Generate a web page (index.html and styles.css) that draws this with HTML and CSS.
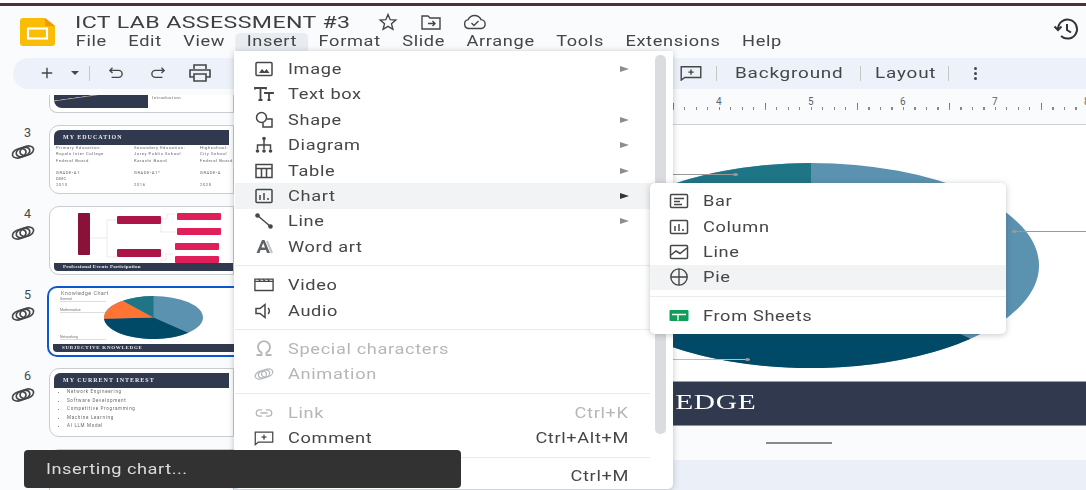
FILE: index.html
```html
<!DOCTYPE html>
<html lang="en">
<head>
  <meta charset="UTF-8" />
  <title>ICT LAB ASSESSMENT #3</title>
  <link rel="stylesheet" href="styles.css">
</head>
<body>
  <div class="app">
    <div class="topline"></div>

    <header class="header">
      <svg class="logo" viewBox="0 0 35 28"><path d="M3 0h22l10 8v17a3 3 0 0 1-3 3H3a3 3 0 0 1-3-3V3a3 3 0 0 1 3-3z" fill="#fbbc04"/><path d="M25 0l10 8h-10z" fill="#f29900"/><rect x="8" y="10.500" width="19" height="10" fill="none" stroke="#fff" stroke-width="2.200"/></svg>
      <div class="doc">
        <div class="title-row">
          <span class="title">ICT LAB ASSESSMENT #3</span>
          <svg class="title-icon star" viewBox="0 0 20 20"><path d="M10 2.500l2.200 5.200 5.600.4-4.300 3.700 1.400 5.500L10 14.300l-4.900 3 1.400-5.500-4.300-3.700 5.600-.4z"/></svg>
          <svg class="title-icon folder" viewBox="0 0 22 16"><path d="M2 2h6l2 2h10v11H2z"/><path d="M8 9.500h7M12.500 7l2.500 2.500-2.500 2.500"/></svg>
          <svg class="title-icon cloud" viewBox="0 0 26 16"><path d="M7 14.500a4.500 4.500 0 0 1-.8-8.900A7 7 0 0 1 19 5.600a4.500 4.500 0 0 1 .5 8.900z"/><path d="M9.500 9l2.500 2.500 4.500-4.500"/></svg>
        </div>
        <nav class="menubar">
          <span class="menubar-item">File</span>
          <span class="menubar-item">Edit</span>
          <span class="menubar-item">View</span>
          <span class="menubar-item active">Insert</span>
          <span class="menubar-item">Format</span>
          <span class="menubar-item">Slide</span>
          <span class="menubar-item">Arrange</span>
          <span class="menubar-item">Tools</span>
          <span class="menubar-item">Extensions</span>
          <span class="menubar-item">Help</span>
        </nav>
      </div>
      <svg class="history" viewBox="0 0 28 24"><path d="M6 12a9.500 9.500 0 1 1 3 7"/><path d="M2.500 9.500L6 13l3.500-3.500"/><path d="M15 7v6l4 2.500"/></svg>
    </header>

    <div class="toolbar">
      <svg class="tool tool-plus" viewBox="0 0 16 16"><path d="M8 2v12M2 8h12"/></svg>
      <span class="caret"></span>
      <span class="tool-sep sep-add"></span>
      <svg class="tool tool-undo" viewBox="0 0 18 16"><path d="M5 2L2 5l3 3M2 5h10a3.500 3.500 0 0 1 0 8H4"/></svg>
      <svg class="tool tool-redo" viewBox="0 0 18 16"><path d="M13 2l3 3-3 3M16 5H6a3.500 3.500 0 0 0 0 8h8"/></svg>
      <svg class="tool tool-print" viewBox="0 0 22 18"><path d="M5 5V1h12v4M5 13H1V6h20v7h-4M5 10h12v7H5z"/></svg>
      <svg class="tool tool-comment" viewBox="0 0 24 18"><path d="M1 17V2h22v12H5z"/><path d="M12 5v6M9 8h6"/></svg>
      <span class="tool-sep sep-comment"></span>
      <span class="tool-text tool-background">Background</span>
      <span class="tool-sep"></span>
      <span class="tool-text tool-layout">Layout</span>
      <span class="tool-sep"></span>
      <span class="kebab"><i></i><i></i><i></i></span>
    </div>

    <div class="workspace">
      <aside class="filmstrip">
        <div class="film-row tail">
          <div class="thumb thumb-tail">
            <div class="tail-dark"></div>
            <span class="tiny tail-text">Introduction</span>
          </div>
        </div>

        <div class="film-row">
          <div class="film-side">
            <span class="film-num">3</span>
            <svg class="rings" viewBox="0 0 24 16"><g transform="rotate(-18 12 8)"><ellipse cx="8" cy="8" rx="7" ry="4.500"/><ellipse cx="12" cy="8" rx="7" ry="4.500"/><ellipse cx="16" cy="8" rx="7" ry="4.500"/></g></svg>
          </div>
          <div class="thumb">
            <div class="band band-top">MY EDUCATION</div>
            <div class="edu-grid tiny">
              <span>Primary Education:</span><span>Secondary Education:</span><span>Highschool:</span>
              <span>Royale Inter College</span><span>Jorey Public School</span><span>City School</span>
              <span>Federal Board</span><span>Karachi Board</span><span>Federal Board</span>
              <span class="edu-gap">GRADE-A1</span><span class="edu-gap">GRADE-A1*</span><span class="edu-gap">GRADE-A</span>
              <span>DMC</span><span></span><span></span>
              <span>2013</span><span>2016</span><span>2020</span>
            </div>
          </div>
        </div>

        <div class="film-row">
          <div class="film-side">
            <span class="film-num">4</span>
            <svg class="rings" viewBox="0 0 24 16"><g transform="rotate(-18 12 8)"><ellipse cx="8" cy="8" rx="7" ry="4.500"/><ellipse cx="12" cy="8" rx="7" ry="4.500"/><ellipse cx="16" cy="8" rx="7" ry="4.500"/></g></svg>
          </div>
          <div class="thumb thumb-tree">
            <svg class="tree" viewBox="0 0 185 60">
              <path d="M40 28h17M57 28V10h10M57 28v19h10M111 9h6v-5h8M111 9v13h14M111 50h5v-6h7M111 50v12h12" fill="none" stroke="#e3e3e3" stroke-width=".7"/>
              <rect x="28" y="3" width="12" height="42" rx="1" fill="#8a1238"/>
              <rect x="67" y="6" width="44" height="8" rx="1" fill="#ad1448"/>
              <rect x="127" y="3" width="44" height="7" rx="1" fill="#e01e5a"/>
              <rect x="127" y="18" width="44" height="7" rx="1" fill="#e01e5a"/>
              <rect x="67" y="39" width="44" height="8" rx="1" fill="#ad1448"/>
              <rect x="125" y="33" width="44" height="7" rx="1" fill="#e01e5a"/>
              <rect x="125" y="46" width="44" height="7" rx="1" fill="#e01e5a"/>
            </svg>
            <div class="band band-bottom">Professional Events Participation</div>
          </div>
        </div>

        <div class="film-row">
          <div class="film-side">
            <span class="film-num">5</span>
            <svg class="rings" viewBox="0 0 24 16"><g transform="rotate(-18 12 8)"><ellipse cx="8" cy="8" rx="7" ry="4.500"/><ellipse cx="12" cy="8" rx="7" ry="4.500"/><ellipse cx="16" cy="8" rx="7" ry="4.500"/></g></svg>
          </div>
          <div class="thumb selected">
            <span class="chart-title">Knowledge Chart</span>
            <span class="chart-label label-general">General</span>
            <span class="chart-label label-maths">Mathematics</span>
            <span class="chart-label label-network">Networking</span>
            <svg class="mini-pie" viewBox="0 0 200 100" preserveAspectRatio="none"><use href="#pie"/></svg>
            <div class="band band-bottom band-caps">SUBJECTIVE KNOWLEDGE</div>
          </div>
        </div>

        <div class="film-row">
          <div class="film-side">
            <span class="film-num">6</span>
            <svg class="rings" viewBox="0 0 24 16"><g transform="rotate(-18 12 8)"><ellipse cx="8" cy="8" rx="7" ry="4.500"/><ellipse cx="12" cy="8" rx="7" ry="4.500"/><ellipse cx="16" cy="8" rx="7" ry="4.500"/></g></svg>
          </div>
          <div class="thumb">
            <div class="band band-top">MY CURRENT INTEREST</div>
            <ul class="interest tiny">
              <li>Network Engineering</li>
              <li>Software Development</li>
              <li>Competitive Programming</li>
              <li>Machine Learning</li>
              <li>AI LLM Model</li>
            </ul>
          </div>
        </div>

        <div class="film-row">
          <div class="film-side"></div>
          <div class="thumb"></div>
        </div>
      </aside>

      <main class="canvas">
        <div class="ruler">
          <span class="ruler-num">4</span>
          <span class="ruler-num">5</span>
          <span class="ruler-num">6</span>
          <span class="ruler-num">7</span>
          <span class="ruler-num">8</span>
        </div>
        <div class="slide">
          <svg class="pie" viewBox="0 0 200 100" preserveAspectRatio="none">
            <defs>
              <g id="pie">
                <ellipse cx="100" cy="50" rx="100" ry="50" fill="#5b92b0"/>
                <path d="M100 50L170 85.700A100 50 0 0 1 0 53z" fill="#004a68"/>
                <path d="M100 50L0 53A100 50 0 0 1 38 11z" fill="#ff7433"/>
                <path d="M100 50L38 11A100 50 0 0 1 100 0z" fill="#1e7585"/>
              </g>
            </defs>
            <use href="#pie"/>
          </svg>
          <span class="leader leader-top"></span>
          <span class="leader leader-right"></span>
          <span class="leader leader-bottom"></span>
        </div>
        <div class="slide-band"><span class="slide-band-text">LEDGE</span></div>
        <div class="notes"><span class="notes-line"></span></div>
        <div class="canvas-foot"></div>
      </main>

      <div class="menu">
        <div class="menu-item"><svg class="mi" viewBox="0 0 20 20"><rect x="2" y="3.500" width="16" height="13" rx="1"/><path class="solid" d="M5 14l3-4 2.500 2.500L12.500 10 15.500 14z"/></svg><span class="mi-label">Image</span><span class="arrow"></span></div>
        <div class="menu-item"><svg class="mi" viewBox="0 0 20 20"><path d="M1 5.500V4h11v1.500M6.500 4v12M4.500 16h4M11 10V9h8v1M15 9v7M13.500 16h3" stroke-width="1.800"/></svg><span class="mi-label">Text box</span></div>
        <div class="menu-item"><svg class="mi" viewBox="0 0 20 20"><circle cx="7.500" cy="7.500" r="5"/><path d="M13 9h5v8H9v-4"/></svg><span class="mi-label">Shape</span><span class="arrow"></span></div>
        <div class="menu-item"><svg class="mi" viewBox="0 0 20 20"><circle class="solid" cx="10" cy="3.500" r="1.800"/><path d="M10 4v6M3.500 14v-4h13v4M10 10v4"/><circle class="solid" cx="3.500" cy="16" r="1.800"/><circle class="solid" cx="10" cy="16" r="1.800"/><circle class="solid" cx="16.500" cy="16" r="1.800"/></svg><span class="mi-label">Diagram</span><span class="arrow"></span></div>
        <div class="menu-item"><svg class="mi" viewBox="0 0 20 20"><path d="M2 3.500h16v13H2zM2 7.500h16M7.500 7.500v9M12.500 7.500v9"/></svg><span class="mi-label">Table</span><span class="arrow"></span></div>
        <div class="menu-item hover"><svg class="mi" viewBox="0 0 20 20"><rect x="2" y="3.500" width="16" height="13" rx="1"/><path d="M6 9v5M10 7v7M14 12v2"/></svg><span class="mi-label">Chart</span><span class="arrow dark"></span></div>
        <div class="menu-item"><svg class="mi" viewBox="0 0 20 20"><path d="M3.500 4.500l13 11"/><circle class="solid" cx="3.500" cy="4.500" r="2.300"/><circle class="solid" cx="16.500" cy="15.500" r="2.300"/></svg><span class="mi-label">Line</span><span class="arrow"></span></div>
        <div class="menu-item"><svg class="mi wordart" viewBox="0 0 20 20"><path d="M13 4l5 12" stroke="#c4c4c4" stroke-width="2"/><path class="solid" d="M8 3h2.500L16 16h-3l-1-3H6.500l-1 3h-3zM7.500 10.500h3.500L9.200 6z"/></svg><span class="mi-label">Word art</span></div>
        <div class="menu-sep"></div>
        <div class="menu-item"><svg class="mi" viewBox="0 0 22 20"><path d="M1 6h20v10H1zM1 3.500h20v2.500H1z"/><path d="M5 3.500l2 2.500M10 3.500l2 2.500M15 3.500l2 2.500"/></svg><span class="mi-label">Video</span></div>
        <div class="menu-item"><svg class="mi" viewBox="0 0 20 20"><path d="M2 7.500h4l5-4v13l-5-4H2z"/><path d="M14 7a4 4 0 0 1 0 6"/></svg><span class="mi-label">Audio</span></div>
        <div class="menu-sep"></div>
        <div class="menu-item off"><svg class="mi" viewBox="0 0 20 20"><path d="M2.500 16h5v-2.500a6 6 0 1 1 5 0V16h5" stroke-width="1.800"/></svg><span class="mi-label">Special characters</span></div>
        <div class="menu-item off"><svg class="mi" viewBox="0 0 24 16"><g transform="rotate(-18 12 8)"><ellipse cx="8" cy="8" rx="7" ry="4.500"/><ellipse cx="12" cy="8" rx="7" ry="4.500"/><ellipse cx="16" cy="8" rx="7" ry="4.500"/></g></svg><span class="mi-label">Animation</span></div>
        <div class="menu-sep"></div>
        <div class="menu-item off"><svg class="mi" viewBox="0 0 22 20"><path d="M9 6.500H6a3.500 3.500 0 0 0 0 7h3M13 6.500h3a3.500 3.500 0 0 1 0 7h-3M7 10h8"/></svg><span class="mi-label">Link</span><span class="hint">Ctrl+K</span></div>
        <div class="menu-item"><svg class="mi" viewBox="0 0 24 20"><path d="M1.500 18V3h21v12H5z"/><path d="M12 6v6M9 9h6"/></svg><span class="mi-label">Comment</span><span class="hint">Ctrl+Alt+M</span></div>
        <div class="menu-sep"></div>
        <div class="menu-item"><span class="hint">Ctrl+M</span></div>
        <div class="menu-scroll"></div>
      </div>

      <div class="submenu">
        <div class="menu-item"><svg class="mi" viewBox="0 0 20 20"><rect x="1.500" y="3.500" width="17" height="13" rx="1"/><path d="M5 7.500h10M5 10.500h6M5 13.500h8"/></svg><span class="mi-label">Bar</span></div>
        <div class="menu-item"><svg class="mi" viewBox="0 0 20 20"><rect x="1.500" y="3.500" width="17" height="13" rx="1"/><path d="M6 9v5M10 7v7M14 12v2"/></svg><span class="mi-label">Column</span></div>
        <div class="menu-item"><svg class="mi" viewBox="0 0 20 20"><rect x="1.500" y="3.500" width="17" height="13" rx="1"/><path d="M2 13l5-4 4 2.500 7-5.500"/></svg><span class="mi-label">Line</span></div>
        <div class="menu-item hover"><svg class="mi" viewBox="0 0 22 20"><circle cx="11" cy="10" r="9"/><path d="M2 10h18M11 1v18"/></svg><span class="mi-label">Pie</span></div>
        <div class="menu-sep"></div>
        <div class="menu-item"><svg class="mi sheets" viewBox="0 0 20 20"><rect x="0.500" y="4" width="19" height="11" rx="1" fill="#0f9d58"/><path d="M3 8.500h14M9 8.500v6" stroke="#fff" stroke-width="1.300"/></svg><span class="mi-label">From Sheets</span></div>
      </div>

      <div class="toast"><span class="toast-text">Inserting chart...</span></div>
    </div>
  </div>
</body>
</html>
```

FILE: styles.css
```css
* {
  box-sizing: border-box;
}
html, body {
  margin: 0;
  height: 100%;
  overflow: hidden;
}
body {
  font-family: 'Roboto', 'Liberation Sans', sans-serif;
  color: #444746;
  background: #f9fbfd;
}
.app {
  width: 1086px;
  height: 490px;
  display: flex;
  flex-direction: column;
  overflow: hidden;
}
.topline {
  height: 6px;
  flex: none;
  border-top: 3px solid #fff;
  background: #4a3531;
}

/* header */
.header {
  height: 52px;
  flex: none;
  display: flex;
  padding-left: 20px;
  padding-right: 6px;
}
.logo {
  width: 35px;
  height: 28px;
  margin-top: 12px;
  flex: none;
}
.doc {
  margin-left: 20px;
}
.title-row {
  height: 27px;
  padding-top: 5px;
  display: flex;
  align-items: center;
}
.title {
  width: 303px;
  flex: none;
  font-size: 17px;
  letter-spacing: .3px;
  color: #3c4043;
  white-space: nowrap;
  transform: scaleX(1.36);
  transform-origin: left;
}
.title-icon {
  fill: none;
  stroke: #444746;
  stroke-width: 1.400;
  flex: none;
}
.star { width: 20px; height: 20px; }
.folder { width: 22px; height: 16px; margin-left: 22px; }
.cloud { width: 26px; height: 16px; margin-left: 20px; }
.menubar {
  display: flex;
  margin-left: -10px;
  height: 18px;
  width: 560px;
  transform: scaleX(1.3);
  transform-origin: left;
}
.menubar-item {
  padding: 0 8.250px;
  font-size: 14px;
  line-height: 17px;
  letter-spacing: .5px;
  color: #444746;
  white-space: nowrap;
}
.menubar-item.active {
  background: #e8ecf1;
  border-radius: 4px 4px 0 0;
}
.history {
  width: 28px;
  height: 24px;
  margin-left: auto;
  margin-top: 11px;
  fill: none;
  stroke: #333;
  stroke-width: 2;
}

/* toolbar */
.toolbar {
  height: 31px;
  flex: none;
  margin-left: 13px;
  padding-left: 27px;
  padding-bottom: 1px;
  display: flex;
  align-items: center;
  background: #edf2fa;
  border-radius: 16px 0 0 16px;
}
.tool {
  fill: none;
  stroke: #444746;
  stroke-width: 1.600;
  flex: none;
}
.tool-plus { width: 14px; height: 14px; }
.caret {
  width: 0;
  height: 0;
  margin-left: 17px;
  border: 4px solid transparent;
  border-top: 4px solid #444746;
  border-bottom: 0;
}
.tool-sep {
  width: 1px;
  height: 15px;
  margin: 0 14px;
  background: #c4c7c5;
  flex: none;
}
.sep-add { margin-left: 10px; }
.tool-undo { width: 18px; height: 14px; margin-left: 3px; }
.tool-redo { width: 18px; height: 14px; margin-left: 24px; }
.tool-print { width: 22px; height: 18px; margin-left: 22px; }
.tool-comment { width: 22px; height: 16px; margin-left: 469px; }
.sep-comment { margin-left: 14px; margin-right: 18px; }
.tool-text {
  flex: none;
  font-size: 14px;
  letter-spacing: .6px;
  color: #444746;
  white-space: nowrap;
  transform: scaleX(1.35);
  transform-origin: left;
}
.tool-background { margin-right: 31px; }
.tool-layout { margin-right: 13px; }
.kebab {
  display: flex;
  flex-direction: column;
  gap: 2px;
  margin-left: 11px;
}
.kebab i {
  width: 3px;
  height: 3px;
  background: #444746;
  border-radius: 50%;
}

/* workspace */
.workspace {
  position: relative;
  flex: 1;
  display: flex;
  min-height: 0;
}
.filmstrip {
  width: 234px;
  flex: none;
  padding-top: 6px;
  display: flex;
  flex-direction: column;
  gap: 12px;
  overflow: hidden;
}
.film-row {
  display: flex;
  height: 69px;
  flex: none;
}
.film-row.tail {
  height: 18px;
  padding-left: 49px;
}
.film-side {
  width: 49px;
  flex: none;
  display: flex;
  flex-direction: column;
  align-items: center;
}
.film-num {
  font-size: 12.500px;
  line-height: 14px;
  color: #444746;
  margin-top: 1px;
  margin-left: 6px;
}
.rings {
  width: 24px;
  height: 16px;
  margin-top: 4px;
  margin-right: 3px;
  fill: none;
  stroke: #444746;
  stroke-width: 1.700;
}
.thumb {
  position: relative;
  flex: 1;
  height: 100%;
  padding: 4px;
  background: #fff;
  border: 1px solid #c9ccd0;
  border-radius: 10px 0 0 10px;
  overflow: hidden;
}
.thumb > * {
  filter: blur(.3px);
}
.thumb-tail {
  display: flex;
  padding: 0 4px 4px;
  border-top: 0;
  border-radius: 0 0 0 8px;
}
.tail-dark {
  width: 94px;
  height: 100%;
  background: #30394d linear-gradient(172deg, transparent 20%, #b9ab9b 22%, transparent 26%);
  border-radius: 0 0 0 8px;
}
.tail-text {
  margin-left: 4px;
}
.tiny {
  font-size: 4.200px;
  color: #666;
  line-height: 6.300px;
  letter-spacing: .55px;
}
.band {
  background: #30394d;
  color: #e8eaed;
  font-family: 'Liberation Serif', serif;
  font-weight: bold;
  white-space: nowrap;
}
.band-top {
  height: 15px;
  padding-left: 9px;
  font-size: 6px;
  line-height: 15px;
  letter-spacing: 1px;
  border-radius: 6px 0 0 0;
}
.band-bottom {
  position: absolute;
  left: 4px;
  right: 0;
  bottom: 3px;
  height: 8px;
  padding-left: 9px;
  font-size: 5px;
  line-height: 8px;
  letter-spacing: .2px;
  border-radius: 0 0 0 4px;
}
.band-caps {
  letter-spacing: .7px;
}
.edu-grid {
  display: grid;
  grid-template-columns: 78px 66px 1fr;
  padding-left: 2px;
  white-space: nowrap;
}
.edu-gap {
  margin-top: 6px;
}
.tree {
  position: absolute;
  left: 0;
  top: 0;
  width: 185px;
  height: 60px;
  margin-top: 3px;
}
.selected {
  overflow: visible;
  border: 2.500px solid #0b57d0;
  border-right: 0;
  margin-left: -2px;
  margin-top: -1px;
  height: 71px;
  border-radius: 10px 0 0 10px;
}
.chart-title {
  display: block;
  margin-top: -2px;
  font-size: 5.500px;
  line-height: 6px;
  letter-spacing: .4px;
  color: #777;
  padding-left: 8px;
}
.chart-label {
  position: absolute;
  left: 11px;
  width: 46px;
  font-size: 3.500px;
  line-height: 4px;
  color: #777;
  border-bottom: 1px solid #ddd;
}
.label-general { top: 9px; }
.label-maths { top: 20px; }
.label-network { top: 47px; }
.mini-pie {
  position: absolute;
  left: 55px;
  top: 8px;
  width: 99px;
  height: 43px;
}
.interest {
  margin: 0;
  padding: 0 0 0 13px;
  font-size: 4.500px;
  line-height: 8.500px;
  letter-spacing: .7px;
}

/* canvas */
.canvas {
  flex: 1;
  min-width: 0;
  display: flex;
  flex-direction: column;
}
.ruler {
  position: relative;
  height: 36px;
  flex: none;
  display: flex;
  padding-left: 440px;
  border-bottom: 1px solid #cfd1d4;
  background-image:
    repeating-linear-gradient(90deg, #888 0 1px, transparent 1px 11.500px),
    repeating-linear-gradient(90deg, #777 0 1px, transparent 1px 92px);
  background-size: 100% 3px, 100% 7px;
  background-position: 439px 18px, 439px 14px;
  background-repeat: no-repeat;
}
.ruler-num {
  width: 92px;
  flex: none;
  padding-top: 7px;
  padding-left: 42px;
  font-size: 10px;
  line-height: 12px;
  letter-spacing: .5px;
  color: #5f6368;
}
.slide {
  position: relative;
  height: 256px;
  flex: none;
  background: #fff;
}
.pie {
  position: absolute;
  left: 349px;
  top: 38px;
  width: 456px;
  height: 205px;
}
.leader {
  position: absolute;
  height: 1px;
  background: #999;
}
.leader::after {
  content: "";
  position: absolute;
  top: -1px;
  width: 5px;
  height: 3px;
  border-radius: 50%;
  background: #999;
}
.leader-top { left: 400px; top: 49px; width: 104px; }
.leader-top::after { right: 0; }
.leader-right { left: 778px; top: 106px; width: 74px; }
.leader-right::after { left: 0; }
.leader-bottom { left: 400px; top: 234px; width: 116px; background: #bbb; }
.leader-bottom::after { right: 0; }
.slide-band {
  position: relative;
  height: 45px;
  flex: none;
  background: #30394d;
  border-top: 1px solid #9a9ea6;
  border-bottom: 1px solid #8d929c;
  overflow: hidden;
}
.slide-band-text {
  position: absolute;
  right: 330px;
  top: 7px;
  font-family: 'Liberation Serif', serif;
  font-size: 21px;
  line-height: 26px;
  letter-spacing: .5px;
  color: #fff;
  white-space: nowrap;
  transform: scaleX(1.4);
  transform-origin: right;
}
.notes {
  height: 34px;
  flex: none;
  padding: 16px 0 0 532px;
}
.notes-line {
  display: block;
  width: 66px;
  height: 2px;
  background: #8a8a8a;
}
.canvas-foot {
  flex: 1;
  background: #ebf0f8;
}

/* insert menu */
.menu, .submenu {
  position: absolute;
  background: #fff;
  box-shadow: 0 1px 6px rgba(60,64,67,.3);
}
.menu {
  left: 234px;
  top: -38px;
  width: 439px;
  height: 438px;
  padding: 5.300px 18px 0 1px;
  border-radius: 0 0 5px 5px;
}
.submenu {
  left: 650px;
  top: 94px;
  width: 356px;
  height: 151px;
  padding-top: 5.500px;
  border-radius: 5px;
}
.menu-item {
  display: flex;
  align-items: center;
  height: 25.400px;
  padding-left: 19px;
  padding-right: 26px;
  font-size: 14px;
  letter-spacing: .5px;
  color: #444746;
  white-space: nowrap;
}
.menu-item.hover {
  background: #f1f3f4;
}
.menu-item.off {
  color: #b4b7ba;
}
.mi {
  width: 20px;
  height: 20px;
  flex: none;
  margin-right: 14px;
  fill: none;
  stroke: currentColor;
  stroke-width: 1.500;
}
.mi .solid {
  fill: currentColor;
  stroke: none;
}
.mi.sheets {
  stroke: none;
}
.mi.wordart {
  color: #5f6368;
}
.mi-label {
  transform: scaleX(1.3);
  transform-origin: left;
}
.arrow {
  width: 0;
  height: 0;
  margin-left: auto;
  border-left: 9px solid #8d8d8d;
  border-top: 3px solid transparent;
  border-bottom: 3px solid transparent;
}
.arrow.dark {
  border-left-color: #333;
}
.hint {
  margin-left: auto;
  transform: scaleX(1.3);
  transform-origin: right;
}
.menu-sep {
  height: 1px;
  margin: 6px 5px 6px 0;
  background: #ebebeb;
}
.submenu .menu-sep {
  margin: 6px 0;
}
.menu-scroll {
  position: absolute;
  left: 421px;
  top: 4px;
  width: 11px;
  height: 379px;
  background: #dadce0;
  border-radius: 5px;
}

/* toast */
.toast {
  position: absolute;
  left: 24px;
  bottom: 2px;
  width: 437px;
  height: 38px;
  padding-left: 22px;
  line-height: 38px;
  background: #323232;
  border-radius: 4px;
  font-size: 14px;
  letter-spacing: .4px;
  color: #dcdcdc;
}
.toast-text {
  display: inline-block;
  transform: scaleX(1.3);
  transform-origin: left;
}
```
